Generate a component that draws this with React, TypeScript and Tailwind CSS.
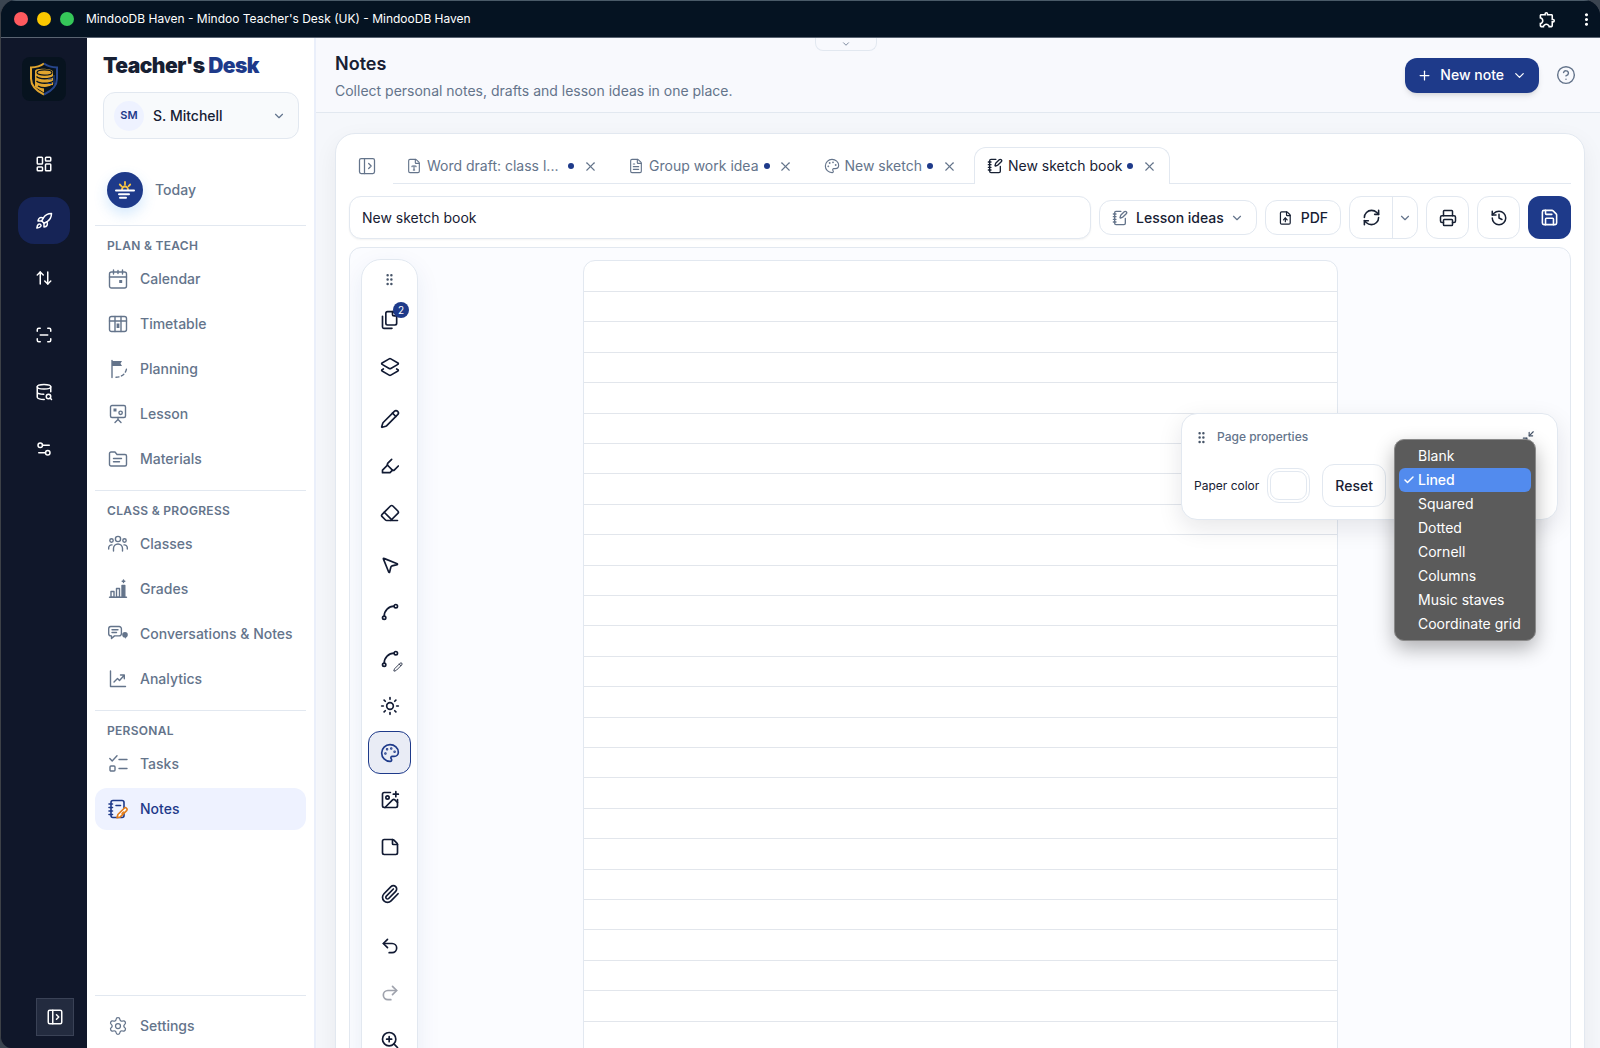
import type { ComponentType, ReactNode } from "react";
import {
  ArrowUpDown,
  Check,
  ChevronDown,
  CircleHelp,
  Eraser,
  FileText,
  FileType,
  FileUp,
  GripVertical,
  Highlighter,
  History,
  ImagePlus,
  Layers2,
  LayoutDashboard,
  Minimize2,
  MousePointer2,
  NotebookPen,
  Palette,
  PanelLeftOpen,
  Paperclip,
  Pencil,
  Plus,
  Printer,
  Redo2,
  RefreshCw,
  Rocket,
  Save,
  ScanLine,
  Settings,
  Settings2,
  Spline,
  StickyNote,
  Sun,
  Undo2,
  X,
  ZoomIn,
} from "lucide-react";
import { MdMoreVert, MdOutlineExtension } from "react-icons/md";

type IconType = ComponentType<{ size?: number; strokeWidth?: number; className?: string }>;

const NavSvg = ({ children }: { children: ReactNode }) => (
  <svg
    width="20"
    height="20"
    viewBox="0 0 20 20"
    fill="none"
    stroke="currentColor"
    strokeWidth="1.4"
    strokeLinecap="round"
    strokeLinejoin="round"
    className="shrink-0"
  >
    {children}
  </svg>
);

const CalendarIcon = () => (
  <NavSvg>
    <rect x="1.5" y="3" width="17" height="16" rx="2" />
    <path d="M1.5 8h17M5.5 1v4M14.5 1v4M10 1.5v3" />
    <rect x="11.2" y="11" width="3" height="3" rx="0.5" fill="currentColor" stroke="none" />
  </NavSvg>
);

const TimetableIcon = () => (
  <NavSvg>
    <rect x="1.5" y="2.5" width="17" height="15" rx="2" />
    <path d="M1.5 7h17M7 2.500v15M13 2.500v15" />
    <rect x="8.6" y="9.5" width="2.800" height="4.5" fill="currentColor" stroke="none" />
  </NavSvg>
);

const PlanningIcon = () => (
  <NavSvg>
    <path d="M4 1.5v17" />
    <path d="M4 2h10l-1.5 2.5L14 7H4z" fill="currentColor" stroke="none" />
    <path d="M8 18.300c5 0 9.500-3 10.500-8.500" strokeDasharray="3 2.600" />
  </NavSvg>
);

const LessonIcon = () => (
  <NavSvg>
    <rect x="2.5" y="1.5" width="15" height="12" rx="1.5" />
    <path d="M10 13.500v2M7 18.500l3-3 3 3" />
    <rect x="5.5" y="4.5" width="3" height="3" fill="currentColor" stroke="none" />
    <circle cx="12.600" cy="8.800" r="1.700" />
  </NavSvg>
);

const MaterialsIcon = () => (
  <NavSvg>
    <path d="M1.5 4.500A1.500 1.500 0 0 1 3 3h4l2 2.500h8A1.500 1.500 0 0 1 18.500 7v8.500A1.500 1.500 0 0 1 17 17H3a1.500 1.500 0 0 1-1.500-1.500z" />
    <path d="M5.5 9.500h8M5.500 12.800h6" />
  </NavSvg>
);

const ClassesIcon = () => (
  <NavSvg>
    <circle cx="10" cy="5" r="2.6" />
    <circle cx="3.5" cy="6.500" r="1.7" />
    <circle cx="16.500" cy="6.500" r="1.7" />
    <path d="M5.500 17v-2.500a4.500 4.500 0 0 1 9 0V17M.7 15v-1.500A2.800 2.800 0 0 1 4 10.900M19.300 15v-1.500a2.800 2.800 0 0 0-3.300-2.600" />
  </NavSvg>
);

const GradesIcon = () => (
  <NavSvg>
    <path d="M1.5 18.300h17" />
    <rect x="3" y="12.500" width="3" height="5.800" />
    <rect x="8.500" y="9.500" width="3" height="8.800" />
    <rect x="14" y="6.500" width="2.800" height="11.800" fill="currentColor" />
    <path d="M15.500 1v2.600M14.200 2.300h2.600" />
  </NavSvg>
);

const ConversationsIcon = () => (
  <NavSvg>
    <path d="M2.800 2.500h8.400a2.200 2.200 0 0 1 2.200 2.200v5a2.200 2.200 0 0 1-2.200 2.200H6.500l-3 2.600v-2.600h-.7A2.200 2.200 0 0 1 .7 9.700v-5a2.200 2.200 0 0 1 2.100-2.200zM4 5.800h6M4 8.500h4.500" />
    <circle cx="17" cy="10.800" r="2.800" fill="currentColor" stroke="none" />
    <path d="M16.500 12l.8 3 1.200-3z" fill="currentColor" stroke="none" />
  </NavSvg>
);

const AnalyticsIcon = () => (
  <NavSvg>
    <path d="M2.500 2v15.500h15" />
    <path d="M6 13l3.500-3.500 2 2 4.500-5M12.500 6h3.800v3.800" />
  </NavSvg>
);

const TasksIcon = () => (
  <NavSvg>
    <path d="M1.800 4.500l2.400 2.400L9 1.800M11 5.500h8M11 14.500h8" />
    <rect x="2" y="12" width="5" height="5" rx="1" />
  </NavSvg>
);

const NotesIcon = () => (
  <NavSvg>
    <rect x="3" y="1.500" width="13" height="17" rx="2" strokeWidth="1.600" />
    <path d="M1 5h3.500M1 8.500h3.500M1 12h3.500M1 15.500h3.500M8 6.500h4.500" strokeWidth="1.600" />
    <path
      d="M16.200 9.200a1.700 1.700 0 0 1 2.400 2.400l-6.300 6.300-3.300.9.900-3.300z"
      fill="#fff"
      stroke="#e07b18"
      strokeWidth="1.600"
    />
    <path d="M14 14.500l1.500-1.500" stroke="#e07b18" />
  </NavSvg>
);

const FilesIcon = ({ size = 18 }: { size?: number }) => (
  <svg
    width={size}
    height={size}
    viewBox="0 0 24 24"
    fill="none"
    stroke="currentColor"
    strokeWidth="2"
    strokeLinecap="round"
    strokeLinejoin="round"
  >
    <path d="M20 7h-3a2 2 0 0 1-2-2V2" />
    <path d="M9 18a2 2 0 0 1-2-2V4a2 2 0 0 1 2-2h7l4 4v10a2 2 0 0 1-2 2Z" />
    <path d="M3 7.600v12.800A1.600 1.600 0 0 0 4.600 22h9.800" />
  </svg>
);

const DatabaseSearchIcon = ({ size = 18 }: { size?: number }) => (
  <svg
    width={size}
    height={size}
    viewBox="0 0 24 24"
    fill="none"
    stroke="currentColor"
    strokeWidth="2"
    strokeLinecap="round"
    strokeLinejoin="round"
  >
    <ellipse cx="12" cy="5" rx="9" ry="3" />
    <path d="M21 11.693V5M3 12a9 3 0 0 0 8.697 2.998M3 5v14a9 3 0 0 0 9.280 2.999" />
    <circle cx="18" cy="18" r="3" />
    <path d="m22 22-1.875-1.875" />
  </svg>
);

const ShieldLogo = () => (
  <svg width="32" height="34" viewBox="0 0 32 34" fill="none">
    <path d="M16 1.500C12.500 4 8 5.200 3 5.500v11c0 7.500 5.500 12.500 13 16" stroke="#e0a52f" strokeWidth="2" />
    <path d="M16 1.500C19.500 4 24 5.200 29 5.500v11c0 7.500-5.500 12.500-13 16" stroke="#27468c" strokeWidth="2" />
    <path d="M7 9v16l9 5.500V26l9-3V10c0-4-18-4-18-1z" fill="#e0a52f" />
    <ellipse cx="16.500" cy="10.500" rx="7.500" ry="2.700" fill="#e0a52f" stroke="#07131f" strokeWidth="1.200" />
    <path
      d="M8.500 14.500c3 3 13 3 17 0M8.500 19c3 3 13 3 17 0M10 24c4 2.500 10 2.500 14.500-.5"
      stroke="#07131f"
      strokeWidth="1.400"
    />
    <path d="M20 17h4M20 21.500h4M26 13v9" stroke="#27468c" strokeWidth="1" />
  </svg>
);

const TodayIcon = () => (
  <svg width="22" height="22" viewBox="0 0 22 22" fill="none" strokeLinecap="round">
    <path
      d="M8 10.500a3 3 0 0 1 6 0M11 3v2.500M5.800 5.500l1.600 1.600M16.200 5.500l-1.600 1.600"
      stroke="#f6c445"
      strokeWidth="1.800"
    />
    <path d="M2 11.500h18M5 15.200h10M6 18.700h6" stroke="#fff" strokeWidth="2" />
  </svg>
);

const railItems: { label: string; icon: IconType; active?: boolean }[] = [
  { label: "Dashboard", icon: LayoutDashboard },
  { label: "Apps", icon: Rocket, active: true },
  { label: "Sync", icon: ArrowUpDown },
  { label: "Scan", icon: ScanLine },
  { label: "Databases", icon: DatabaseSearchIcon },
  { label: "Preferences", icon: Settings2 },
];

const sections = [
  {
    title: "PLAN & TEACH",
    items: [
      { label: "Calendar", icon: CalendarIcon },
      { label: "Timetable", icon: TimetableIcon },
      { label: "Planning", icon: PlanningIcon },
      { label: "Lesson", icon: LessonIcon },
      { label: "Materials", icon: MaterialsIcon },
    ],
  },
  {
    title: "CLASS & PROGRESS",
    items: [
      { label: "Classes", icon: ClassesIcon },
      { label: "Grades", icon: GradesIcon },
      { label: "Conversations & Notes", icon: ConversationsIcon },
      { label: "Analytics", icon: AnalyticsIcon },
    ],
  },
  {
    title: "PERSONAL",
    items: [
      { label: "Tasks", icon: TasksIcon },
      { label: "Notes", icon: NotesIcon },
    ],
  },
];

const tabs: { label: string; icon: IconType; active?: boolean }[] = [
  { label: "Word draft: class l...", icon: FileType },
  { label: "Group work idea", icon: FileText },
  { label: "New sketch", icon: Palette },
  { label: "New sketch book", icon: NotebookPen, active: true },
];

const toolGroups: { label: string; icon: IconType; badge?: string; active?: boolean; edit?: boolean; disabled?: boolean }[][] = [
  [
    { label: "Pages", icon: FilesIcon, badge: "2" },
    { label: "Layers", icon: Layers2 },
  ],
  [
    { label: "Pen", icon: Pencil },
    { label: "Highlighter", icon: Highlighter },
    { label: "Eraser", icon: Eraser },
  ],
  [
    { label: "Select", icon: MousePointer2 },
    { label: "Curve", icon: Spline },
    { label: "Edit curve", icon: Spline, edit: true },
    { label: "Laser", icon: Sun },
    { label: "Page properties", icon: Palette, active: true },
    { label: "Add image", icon: ImagePlus },
    { label: "Sticky note", icon: StickyNote },
    { label: "Attach file", icon: Paperclip },
  ],
  [
    { label: "Undo", icon: Undo2 },
    { label: "Redo", icon: Redo2, disabled: true },
    { label: "Zoom in", icon: ZoomIn },
  ],
];

const paperStyles = ["Blank", "Lined", "Squared", "Dotted", "Cornell", "Columns", "Music staves", "Coordinate grid"];

const TitleBar = () => (
  <header className="flex h-[38px] shrink-0 items-center border-t border-b border-t-[#4a5a68] border-b-[#5a6472] bg-[#051322] pr-1 pl-[13px]">
    <div className="flex gap-[9px]">
      <span className="size-[14px] rounded-full bg-[#ff5a5f]" />
      <span className="size-[14px] rounded-full bg-[#fcc800]" />
      <span className="size-[14px] rounded-full bg-[#35c759]" />
    </div>
    <h1 className="ml-3 text-xs text-white">MindooDB Haven - Mindoo Teacher's Desk (UK) - MindooDB Haven</h1>
    <div className="ml-auto flex items-center gap-5 text-white">
      <button aria-label="Extensions">
        <MdOutlineExtension size={19} />
      </button>
      <button aria-label="More">
        <MdMoreVert size={19} />
      </button>
    </div>
  </header>
);

const Rail = () => (
  <nav className="flex w-[86px] shrink-0 flex-col items-center bg-[#10172a] pt-[19px]">
    <div className="flex size-11 shrink-0 items-center justify-center rounded-lg bg-[#07131f]">
      <ShieldLogo />
    </div>
    <div className="mt-[39px] flex flex-col gap-[10px]">
      {railItems.map(({ label, icon: Icon, active }) => (
        <button
          key={label}
          aria-label={label}
          className={`flex h-[47px] w-[52px] items-center justify-center rounded-2xl text-white ${active ? "bg-[#162456]" : ""}`}
        >
          <Icon size={18} strokeWidth={2} />
        </button>
      ))}
    </div>
    <button
      aria-label="Expand"
      className="mt-auto mb-3 ml-[22px] flex size-[38px] items-center justify-center border border-[#3a4256] bg-[#232b3f] text-white"
    >
      <PanelLeftOpen size={18} />
    </button>
  </nav>
);

const Sidebar = () => (
  <aside className="flex w-[229px] shrink-0 flex-col border-r-2 border-[#eaeffa] bg-white px-2">
    <div className="px-2 pt-[14px]">
      <h2 className="text-[21px] leading-7 font-black tracking-tight whitespace-nowrap text-[#172033]">
        Teacher's <span className="text-[#1e3a8a]">Desk</span>
      </h2>
      <button className="mt-3 flex h-[47px] w-[196px] items-center rounded-xl border border-[#e2e8f0] bg-[#f8fafc] pr-3 pl-[10px]">
        <span className="flex size-[30px] items-center justify-center rounded-full bg-[#eef2ff] text-[11px] font-semibold text-[#1e3a8a]">
          SM
        </span>
        <span className="ml-[9px] text-sm font-medium text-[#172033]">S. Mitchell</span>
        <ChevronDown size={14} className="ml-auto text-slate-500" />
      </button>
    </div>
    <a href="#today" className="mt-[33px] flex items-center px-3 text-sm font-medium text-[#64748b]">
      <span className="flex size-9 items-center justify-center rounded-full bg-[#1e3a8a] shadow-[0_6px_14px_rgba(56,150,240,0.22)]">
        <TodayIcon />
      </span>
      <span className="ml-3">Today</span>
    </a>
    <div className="mt-[17px]">
      {sections.map((section) => (
        <section key={section.title} className="mb-[10px] border-t border-[#e2e8f0] pt-3">
          <h3 className="pl-3 text-xs leading-4 font-semibold tracking-wide text-[#64748b]">{section.title}</h3>
          <ul className="mt-1 flex flex-col gap-[3px]">
            {section.items.map(({ label, icon: Icon }) => (
              <li key={label}>
                <a
                  href={"#" + label}
                  className={`flex h-[42px] items-center gap-3 rounded-xl pl-[13px] text-sm font-medium whitespace-nowrap ${
                    label === "Notes" ? "bg-[#eef2ff] text-[#1e3a8a]" : "text-[#64748b]"
                  }`}
                >
                  <Icon />
                  {label}
                </a>
              </li>
            ))}
          </ul>
        </section>
      ))}
    </div>
    <div className="mt-auto border-t border-[#e2e8f0] pt-2">
      <a href="#settings" className="flex h-11 items-center gap-3 pl-[13px] text-sm font-medium text-[#64748b]">
        <Settings size={20} strokeWidth={1.5} />
        Settings
      </a>
    </div>
  </aside>
);

const TabBar = () => (
  <div className="flex h-[37px] shrink-0">
    <button aria-label="Show list" className="flex w-9 items-center justify-center text-[#64748b]">
      <PanelLeftOpen size={20} strokeWidth={1.5} />
    </button>
    <div className="ml-2 flex flex-1 gap-1 border-b border-[#e2e8f0]">
      {tabs.map(({ label, icon: Icon, active }) => (
        <div
          key={label}
          className={`-mb-px flex items-center rounded-t-xl border border-b-0 pr-2 pl-3 text-sm whitespace-nowrap ${
            active ? "border-[#e2e8f0] bg-white text-[#172033]" : "border-transparent text-[#64748b]"
          }`}
        >
          <Icon size={16} strokeWidth={active ? 2 : 1.700} />
          <button className={`ml-[5px] text-left ${label.endsWith("...") ? "w-[136px]" : ""}`}>{label}</button>
          <span className="ml-[5px] size-[6px] rounded-full bg-[#1e3a8a]" />
          <button aria-label={"Close " + label} className="ml-1 flex size-6 items-center justify-center text-[#64748b]">
            <X size={15} strokeWidth={1.700} />
          </button>
        </div>
      ))}
    </div>
  </div>
);

const Toolbar = () => (
  <div className="mt-3 flex shrink-0 items-center gap-2 text-[#172033]">
    <input
      aria-label="Title"
      defaultValue="New sketch book"
      className="h-[43px] min-w-0 flex-1 rounded-xl border border-[#e2e8f0] bg-white px-3 text-sm shadow-xs"
    />
    <button className="flex h-[35px] w-[158px] items-center rounded-xl border border-[#e2e8f0] px-3 text-sm font-medium whitespace-nowrap">
      <NotebookPen size={16} className="text-[#64748b]" />
      <span className="ml-2">Lesson ideas</span>
      <ChevronDown size={14} className="ml-auto text-[#64748b]" />
    </button>
    <button className="flex h-[35px] w-[76px] items-center gap-2 rounded-xl border border-[#e2e8f0] px-3 text-sm font-medium">
      <FileUp size={16} />
      PDF
    </button>
    <div className="flex h-[43px] w-[69px] rounded-xl border border-[#e2e8f0]">
      <button aria-label="Sync" className="flex flex-1 items-center justify-center border-r border-[#e2e8f0]">
        <RefreshCw size={19} />
      </button>
      <button aria-label="Sync options" className="flex w-6 items-center justify-center text-[#64748b]">
        <ChevronDown size={14} />
      </button>
    </div>
    <button aria-label="Print" className="flex size-[43px] items-center justify-center rounded-xl border border-[#e2e8f0]">
      <Printer size={18} />
    </button>
    <button aria-label="History" className="flex size-[43px] items-center justify-center rounded-xl border border-[#e2e8f0]">
      <History size={18} />
    </button>
    <button aria-label="Save" className="flex size-[43px] items-center justify-center rounded-xl bg-[#1e3a8a] text-white">
      <Save size={19} />
    </button>
  </div>
);

const ToolPanel = () => (
  <div className="flex w-[57px] flex-col items-center rounded-[20px] border border-[#e2e8f0] bg-white pt-3 pb-3 text-[#111a33] shadow-[0_8px_24px_rgba(30,58,138,0.08)]">
    <GripVertical size={15} className="text-[#475569]" />
    <div className="mt-[11px] flex flex-col gap-[9px]">
      {toolGroups.map((group, i) => (
        <div key={i} className="flex flex-col gap-1">
          {group.map(({ label, icon: Icon, badge, active, edit, disabled }) => (
            <button
              key={label}
              aria-label={label}
              disabled={disabled}
              className={`relative flex size-[43px] items-center justify-center rounded-xl ${
                active ? "border border-[#1e3a8a] bg-[#e9ecf5] text-[#1e3a8a]" : ""
              } ${disabled ? "opacity-40" : ""}`}
            >
              <Icon size={20} strokeWidth={2} />
              {badge && (
                <span className="absolute top-1 right-[2px] flex size-4 items-center justify-center rounded-full bg-[#1e3a8a] text-[10px] text-white">
                  {badge}
                </span>
              )}
              {edit && <Pencil size={10} className="absolute right-2 bottom-2" />}
            </button>
          ))}
        </div>
      ))}
    </div>
  </div>
);

const PageProperties = () => (
  <div className="absolute top-[165px] right-3 h-[107px] w-[377px] rounded-2xl border border-[#e2e8f0] bg-white px-3 text-[#172033] shadow-[0_8px_24px_rgba(15,23,42,0.10)]">
    <div className="flex items-center pt-[13px]">
      <GripVertical size={15} className="text-[#475569]" />
      <h3 className="ml-2 text-xs leading-5 font-medium text-[#64748b]">Page properties</h3>
      <button aria-label="Collapse" className="mr-[10px] ml-auto text-[#475569]">
        <Minimize2 size={14} />
      </button>
    </div>
    <div className="mt-[17px] flex items-center">
      <label htmlFor="paper-color" className="text-xs">
        Paper color
      </label>
      <button
        id="paper-color"
        className="ml-2 h-[35px] w-[43px] rounded-xl border border-[#e2e8f0] bg-white p-[2px]"
      >
        <span className="block h-full rounded-[9px] border border-[#e2e8f0]" />
      </button>
      <button className="ml-3 h-[43px] rounded-xl border border-[#e2e8f0] px-3 text-sm font-medium">Reset</button>
    </div>
    <ul
      role="listbox"
      aria-label="Paper style"
      className="absolute top-[25px] right-[21px] w-[142px] rounded-[10px] border border-[#8a8a8a] bg-[#5b5b5b] p-1 text-sm text-white shadow-[0_8px_20px_rgba(0,0,0,0.30)]"
    >
      {paperStyles.map((name) => (
        <li
          key={name}
          role="option"
          aria-selected={name === "Lined"}
          className={`flex h-6 items-center rounded-md pl-1 whitespace-nowrap ${name === "Lined" ? "bg-[#528bee] font-medium" : ""}`}
        >
          <span className="w-[15px]">{name === "Lined" && <Check size={12} strokeWidth={3} />}</span>
          {name}
        </li>
      ))}
    </ul>
  </div>
);

const Paper = () => (
  <div className="mx-auto h-[1060px] w-[755px] overflow-hidden rounded-t-xl border border-[#e2e8f0] bg-white">
    <svg width="100%" height="1060" stroke="#e2e6ec" strokeWidth="1" shapeRendering="crispEdges">
      {Array.from({ length: 34 }, (_, i) => (
        <line key={i} x1="0" x2="100%" y1={(i + 1) * 30.4} y2={(i + 1) * 30.4} />
      ))}
    </svg>
  </div>
);

export default function App() {
  return (
    <div className="h-screen overflow-hidden bg-[#3a4450] font-['Inter',sans-serif] text-[#172033]">
      <div className="flex h-full flex-col overflow-hidden rounded-t-2xl rounded-bl-xl border-l border-[#3d4147] bg-[#10172a]">
        <TitleBar />
        <div className="flex min-h-0 flex-1">
          <Rail />
          <Sidebar />
          <main className="flex min-w-0 flex-1 flex-col bg-[#f5f7fb]">
            <div className="relative flex h-[75px] shrink-0 items-center border-b border-[#e2e8f0] bg-[#f8f9fd] pr-6 pl-[19px]">
              <div className="pt-[3px]">
                <h2 className="text-lg leading-7 font-semibold">Notes</h2>
                <p className="text-sm leading-[26px] text-[#64748b]">
                  Collect personal notes, drafts and lesson ideas in one place.
                </p>
              </div>
              <button
                aria-label="Toggle header"
                className="absolute top-0 left-1/2 -ml-[143px] flex h-[13px] w-[62px] items-center justify-center rounded-b-lg border border-t-0 border-[#e2e8f0] text-[#64748b]"
              >
                <ChevronDown size={10} />
              </button>
              <button className="ml-auto flex h-[35px] items-center rounded-xl bg-[#1e3a8a] px-3 text-sm font-medium text-white shadow-md">
                <Plus size={15} />
                <span className="mr-2 ml-2">New note</span>
                <ChevronDown size={15} />
              </button>
              <button aria-label="Help" className="ml-[17px] text-[#64748b]">
                <CircleHelp size={20} strokeWidth={1.700} />
              </button>
            </div>
            <div className="min-h-0 flex-1 overflow-hidden pt-5 pr-[15px] pl-[19px]">
              <div className="flex h-[1100px] flex-col rounded-[20px] border border-[#e2e8f0] bg-white px-[13px] pt-[13px] shadow-[0_8px_24px_rgba(15,23,42,0.06)]">
                <TabBar />
                <Toolbar />
                <div className="relative mt-2 flex flex-1 items-start overflow-hidden rounded-t-xl border border-[#e2e8f0] bg-[#fbfcff] px-3 pt-3">
                  <div className="absolute top-[11px] left-[11px]">
                    <ToolPanel />
                  </div>
                  <Paper />
                  <PageProperties />
                </div>
              </div>
            </div>
          </main>
        </div>
      </div>
    </div>
  );
}
